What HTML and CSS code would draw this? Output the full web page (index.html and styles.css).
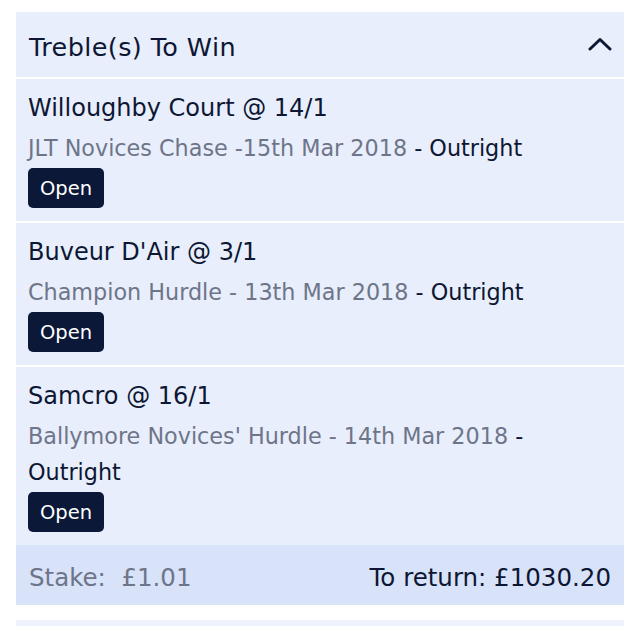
FILE: index.html
```html
<!DOCTYPE html>
<html lang="en">
<head>
    <meta charset="UTF-8">
    <meta name="viewport" content="width=device-width, initial-scale=1.0">
    <title>Bet Receipt</title>
    <link rel="stylesheet" href="styles.css">
</head>
<body>
    <div class="bet-card">
        <div class="bet-header">
            <h2>Treble(s) To Win</h2>
            <svg class="chevron" width="24" height="14" viewBox="0 0 24 14">
                <path d="M2 12 L12 2.5 L22 12" fill="none" stroke="#0d1733" stroke-width="3" stroke-linecap="round" stroke-linejoin="round"/>
            </svg>
        </div>

        <div class="selection">
            <div class="sel-name">Willoughby Court @ 14/1</div>
            <div class="sel-event">JLT Novices Chase -15th Mar 2018 <span class="market">-</span> <span class="market">Outright</span></div>
            <button class="btn-open">Open</button>
        </div>

        <div class="selection">
            <div class="sel-name">Buveur D'Air @ 3/1</div>
            <div class="sel-event">Champion Hurdle - 13th Mar 2018 <span class="market">-</span> <span class="market">Outright</span></div>
            <button class="btn-open">Open</button>
        </div>

        <div class="selection">
            <div class="sel-name">Samcro @ 16/1</div>
            <div class="sel-event">Ballymore Novices' Hurdle - 14th Mar 2018 <span class="market">-</span> <span class="market">Outright</span></div>
            <button class="btn-open">Open</button>
        </div>

        <div class="bet-footer">
            <span class="stake">Stake:&nbsp; £1.01</span>
            <span class="returns">To return: £1030.20</span>
        </div>
    </div>

    <div class="bet-card next"></div>
</body>
</html>
```

FILE: styles.css
```css
* {
    margin: 0;
    padding: 0;
    box-sizing: border-box;
}

body {
    font-family: "DejaVu Sans", Verdana, sans-serif;
    background: #fff;
    color: #0d1733;
    padding: 12px 16px 0 16px;
}

/* white 2px gaps between the rows act as separators */
.bet-card {
    display: flex;
    flex-direction: column;
    gap: 2px;
}

.bet-header,
.selection {
    background: #e8eefb;
}

.bet-header {
    height: 65px;
    display: flex;
    align-items: center;
    justify-content: space-between;
    padding: 4px 12px 0 13px;
}

.bet-header h2 {
    font-weight: normal;
    font-size: 25.5px;
    letter-spacing: 0.4px;
}

.chevron {
    margin-top: -5px;
}

.selection {
    padding: 11px 13px 13px 12px;
}

.sel-name {
    font-size: 24px;
    line-height: 36px;
}

.sel-event {
    font-size: 22.3px;
    line-height: 36px;
    color: #6e7589;
    margin-top: 4px;
}

.market {
    color: #0d1733;
}

.btn-open {
    display: block;
    margin-top: 2px;
    background: #0b1838;
    color: #fff;
    border: none;
    border-radius: 5px;
    font-family: inherit;
    font-size: 19.5px;
    height: 40px;
    padding: 0 12px;
}

.bet-footer {
    margin-top: -2px;
    height: 60px;
    background: #d8e2f9;
    display: flex;
    align-items: center;
    justify-content: space-between;
    padding: 4px 13px 0 13px;
    font-size: 24.5px;
}

.stake {
    color: #6e7589;
}

.next {
    margin-top: 15px;
    height: 20px;
    background: #eef2fc;
}
```
